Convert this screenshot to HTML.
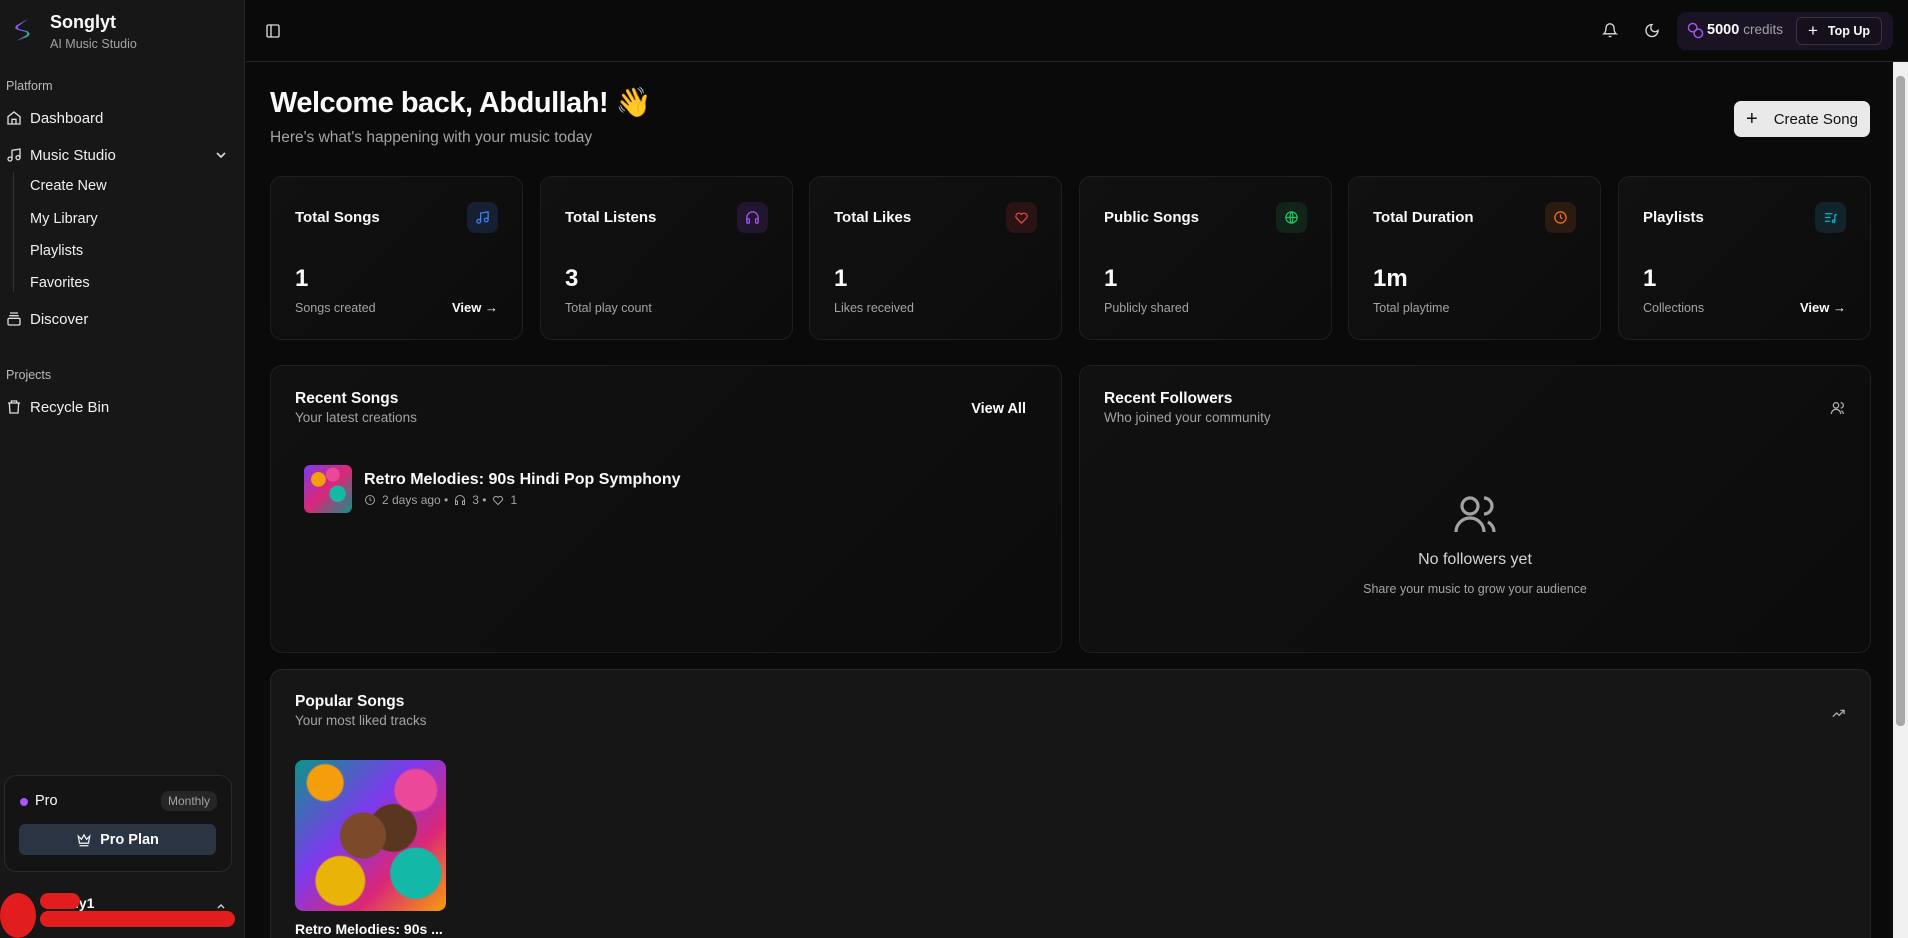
<!DOCTYPE html>
<html style="overflow:hidden;width:1908px;height:938px"><head><meta charset="utf-8"><style>
*{box-sizing:border-box;margin:0;padding:0}
body{width:1908px;height:938px;overflow:hidden;background:#0a0a0a;font-family:"Liberation Sans",sans-serif;color:#fafafa;position:relative}
.abs{position:absolute}
.sb{left:0;top:0;width:245px;height:938px;background:#171717;border-right:1px solid #262626}
.nav{position:absolute;left:30px;font-size:15px;color:#f0f0f0}
.ic{position:absolute;left:6px}
.hdr{left:246px;top:0;right:0;height:62px;border-bottom:1px solid #262626;background:#0a0a0a}
.card{position:absolute;border:1px solid #1f1f1f;border-radius:12px;background:linear-gradient(135deg,#111 0%,#0c0c0c 100%)}
.st .t{position:absolute;left:24px;top:32px;font-size:15px;font-weight:bold}
.st .ib{position:absolute;right:24px;top:25px;width:31px;height:31px;border-radius:8px;display:flex;align-items:center;justify-content:center}
.st .n{position:absolute;left:24px;top:88px;font-size:24px;font-weight:bold}
.st .s{position:absolute;left:24px;top:124px;font-size:12.5px;color:#a3a3a3}
.st .v{position:absolute;right:24px;top:123px;font-size:13px;font-weight:bold}
svg{display:block}
</style></head><body>
<div class="abs sb">
  <svg class="abs" style="left:10px;top:16px" width="24" height="28" viewBox="0 0 24 28"><defs><linearGradient id="g" x1="0" y1="0" x2="1" y2="1"><stop offset="0" stop-color="#a855f7"/><stop offset=".5" stop-color="#6366f1"/><stop offset="1" stop-color="#22c55e"/></linearGradient></defs><path d="M18 3 L7 9 Q3 12 8 14 L16 16 Q19 18 15 20 L6 25 L17 21 Q22 18 17 15 L9 13 Q6 11 10 9 Z" fill="url(#g)"/></svg>
  <div class="abs" style="left:50px;top:12px;font-size:18px;font-weight:bold">Songlyt</div>
  <div class="abs" style="left:50px;top:37px;font-size:12.5px;color:#a3a3a3">AI Music Studio</div>
  <div class="abs" style="left:6px;top:79px;font-size:12.5px;color:#bbb">Platform</div>
  <svg class="ic" style="top:110px" width="16" height="16" viewBox="0 0 24 24" fill="none" stroke="#ddd" stroke-width="2"><path d="M3 10l9-7 9 7v11H3z"/><path d="M9 21v-7h6v7"/></svg>
  <div class="nav" style="top:110px">Dashboard</div>
  <svg class="ic" style="top:147px" width="16" height="16" viewBox="0 0 24 24" fill="none" stroke="#ddd" stroke-width="2"><path d="M9 18V5l12-2v13"/><circle cx="6" cy="18" r="3"/><circle cx="18" cy="16" r="3"/></svg>
  <div class="nav" style="top:147px">Music Studio</div>
  <svg class="abs" style="left:215px;top:150px" width="12" height="10" viewBox="0 0 12 10" fill="none" stroke="#ddd" stroke-width="1.6"><path d="M2 3l4 4 4-4"/></svg>
  <div class="abs" style="left:13px;top:172px;width:1px;height:120px;background:#333"></div>
  <div class="nav" style="top:178px;font-size:14.5px">Create New</div>
  <div class="nav" style="top:211px;font-size:14.5px">My Library</div>
  <div class="nav" style="top:243px;font-size:14.5px">Playlists</div>
  <div class="nav" style="top:275px;font-size:14.5px">Favorites</div>
  <svg class="ic" style="top:311px" width="16" height="16" viewBox="0 0 24 24" fill="none" stroke="#ddd" stroke-width="2"><path d="M6 3h12M5 7h14"/><rect x="3" y="11" width="18" height="10" rx="2"/></svg>
  <div class="nav" style="top:311px">Discover</div>
  <div class="abs" style="left:6px;top:368px;font-size:12.5px;color:#bbb">Projects</div>
  <svg class="ic" style="top:399px" width="16" height="16" viewBox="0 0 24 24" fill="none" stroke="#ddd" stroke-width="2"><path d="M3 6h18M8 6V3h8v3M5 6l1 15h12l1-15"/></svg>
  <div class="nav" style="top:399px">Recycle Bin</div>
  <div class="abs" style="left:4px;top:775px;width:228px;height:97px;border:1px solid #2a2a2a;border-radius:12px;background:#141414">
    <div class="abs" style="left:15px;top:22px;width:8px;height:8px;border-radius:50%;background:#a855f7"></div>
    <div class="abs" style="left:30px;top:17px;font-size:14.5px">Pro</div>
    <div class="abs" style="right:14px;top:15px;padding:3px 7px;border-radius:8px;background:#262626;font-size:12px;color:#a3a3a3">Monthly</div>
    <div class="abs" style="left:14px;top:48px;width:197px;height:31px;border-radius:6px;background:#2b3442;display:flex;align-items:center;justify-content:center;font-size:14.5px;font-weight:bold">
      <svg width="16" height="14" viewBox="0 0 24 22" fill="none" stroke="#eee" stroke-width="2" style="margin-right:8px"><path d="M3 5l5 5 4-7 4 7 5-5-2 11H5z"/><path d="M5 20h14"/></svg>Pro Plan</div>
  </div>
  <div class="abs" style="left:75px;top:895px;font-size:14px;font-weight:bold">ly1</div>
  <svg class="abs" style="left:216px;top:903px" width="10" height="14" viewBox="0 0 10 14" fill="none" stroke="#ccc" stroke-width="1.5"><path d="M2 5l3-3 3 3M2 9l3 3 3-3"/></svg>
  <div class="abs" style="left:0;top:893px;width:36px;height:45px;border-radius:50%;background:#e11d1d"></div>
  <div class="abs" style="left:40px;top:893px;width:40px;height:16px;border-radius:8px;background:#e11d1d"></div>
  <div class="abs" style="left:40px;top:911px;width:195px;height:16px;border-radius:8px;background:#e11d1d"></div>
</div>

<div class="abs hdr">
  <svg class="abs" style="left:19px;top:23px" width="16" height="16" viewBox="0 0 24 24" fill="none" stroke="#ddd" stroke-width="2"><rect x="3" y="3" width="18" height="18" rx="2"/><path d="M9 3v18"/></svg>
  <svg class="abs" style="left:1356px;top:22px" width="16" height="17" viewBox="0 0 24 24" fill="none" stroke="#ddd" stroke-width="2"><path d="M6 8a6 6 0 0112 0c0 7 3 9 3 9H3s3-2 3-9"/><path d="M10 21h4"/></svg>
  <svg class="abs" style="left:1398px;top:22px" width="16" height="17" viewBox="0 0 24 24" fill="none" stroke="#ddd" stroke-width="2"><path d="M12 3a6 6 0 009 9 9 9 0 11-9-9z"/></svg>
  <div class="abs" style="left:1431px;top:12px;width:216px;height:38px;border-radius:9px;background:#1a1324">
    <svg class="abs" style="left:10px;top:10px" width="17" height="17" viewBox="0 0 24 24" fill="none" stroke="#a855f7" stroke-width="2"><circle cx="8" cy="8" r="6"/><circle cx="16" cy="16" r="6"/></svg>
    <div class="abs" style="left:30px;top:10px;font-size:14.5px;font-weight:bold">5000 <span style="font-weight:normal;color:#a3a3a3;font-size:13.5px">credits</span></div>
    <div class="abs" style="left:119px;top:5px;width:86px;height:28px;border:1px solid #3a3340;border-radius:6px;background:#15101c;font-size:12.5px;font-weight:bold;display:flex;align-items:center;justify-content:center"><span style="font-size:17px;font-weight:normal;margin-right:10px">+</span>Top Up</div>
  </div>
</div>
<div class="abs" style="left:1893px;top:62px;width:15px;height:876px;background:#f0f0f0"><div style="margin:14px 3px 0;height:650px;background:#a8a8a8;border-radius:4px"></div></div>

<div class="abs" style="left:270px;top:86px;font-size:29px;font-weight:bold;letter-spacing:-.5px">Welcome back, Abdullah! 👋</div>
<div class="abs" style="left:270px;top:129px;font-size:15.5px;color:#a3a3a3">Here's what's happening with your music today</div>
<div class="abs" style="left:1734px;top:101px;width:136px;height:36px;border-radius:7px;background:#e9e9e9;color:#111;font-size:15px;display:flex;align-items:center;justify-content:center"><span style="font-size:20px;margin-right:16px">+</span>Create Song</div>

<div class="card st" style="left:270px;top:176px;width:253px;height:164px"><div class="t">Total Songs</div><div class="ib" style="background:#172033"><svg width="15" height="15" viewBox="0 0 24 24" fill="none" stroke="#3b82f6" stroke-width="2"><path d="M9 18V5l12-2v13"/><circle cx="6" cy="18" r="3"/><circle cx="18" cy="16" r="3"/></svg></div><div class="n">1</div><div class="s">Songs created</div><div class="v">View →</div></div>
<div class="card st" style="left:540px;top:176px;width:253px;height:164px"><div class="t">Total Listens</div><div class="ib" style="background:#21162e"><svg width="15" height="15" viewBox="0 0 24 24" fill="none" stroke="#a855f7" stroke-width="2"><path d="M3 18v-6a9 9 0 0118 0v6"/><rect x="3" y="14" width="4" height="7" rx="1"/><rect x="17" y="14" width="4" height="7" rx="1"/></svg></div><div class="n">3</div><div class="s">Total play count</div></div>
<div class="card st" style="left:809px;top:176px;width:253px;height:164px"><div class="t">Total Likes</div><div class="ib" style="background:#2a1315"><svg width="15" height="15" viewBox="0 0 24 24" fill="none" stroke="#ef4444" stroke-width="2"><path d="M12 21l-8-8a5 5 0 017-7l1 1 1-1a5 5 0 017 7z"/></svg></div><div class="n">1</div><div class="s">Likes received</div></div>
<div class="card st" style="left:1079px;top:176px;width:253px;height:164px"><div class="t">Public Songs</div><div class="ib" style="background:#112419"><svg width="15" height="15" viewBox="0 0 24 24" fill="none" stroke="#22c55e" stroke-width="2"><circle cx="12" cy="12" r="9"/><path d="M3 12h18M12 3c3 3 3 15 0 18M12 3c-3 3-3 15 0 18"/></svg></div><div class="n">1</div><div class="s">Publicly shared</div></div>
<div class="card st" style="left:1348px;top:176px;width:253px;height:164px"><div class="t">Total Duration</div><div class="ib" style="background:#2b1a10"><svg width="15" height="15" viewBox="0 0 24 24" fill="none" stroke="#f97316" stroke-width="2"><circle cx="12" cy="12" r="9"/><path d="M12 7v5l3 2"/></svg></div><div class="n">1m</div><div class="s">Total playtime</div></div>
<div class="card st" style="left:1618px;top:176px;width:253px;height:164px"><div class="t">Playlists</div><div class="ib" style="background:#10242a"><svg width="15" height="15" viewBox="0 0 24 24" fill="none" stroke="#06b6d4" stroke-width="2"><path d="M3 6h12M3 12h9M3 18h8"/><path d="M19 18V8l3-1"/><circle cx="17" cy="18" r="2"/></svg></div><div class="n">1</div><div class="s">Collections</div><div class="v">View →</div></div>

<div class="card" style="left:270px;top:365px;width:792px;height:288px">
  <div class="abs" style="left:24px;top:24px;font-size:15.5px;font-weight:bold">Recent Songs</div>
  <div class="abs" style="left:24px;top:44px;font-size:13.5px;color:#a3a3a3">Your latest creations</div>
  <div class="abs" style="right:35px;top:35px;font-size:14.5px;font-weight:bold">View All</div>
  <div class="abs" style="left:33px;top:99px;width:48px;height:48px;border-radius:6px;background:radial-gradient(circle at 30% 30%,#f59e0b 0 15%,transparent 16%),radial-gradient(circle at 70% 60%,#14b8a6 0 18%,transparent 19%),radial-gradient(circle at 60% 20%,#ec4899 0 14%,transparent 15%),linear-gradient(135deg,#7c3aed,#db2777 50%,#0d9488)"></div>
  <div class="abs" style="left:93px;top:105px;font-size:16px;font-weight:bold">Retro Melodies: 90s Hindi Pop Symphony</div>
  <div class="abs" style="left:93px;top:127px;font-size:12px;color:#a3a3a3;display:flex;align-items:center;gap:6px">
    <svg width="12" height="12" viewBox="0 0 24 24" fill="none" stroke="#a3a3a3" stroke-width="2"><circle cx="12" cy="12" r="9"/><path d="M12 7v5l3 2"/></svg>2 days ago • <svg width="12" height="12" viewBox="0 0 24 24" fill="none" stroke="#a3a3a3" stroke-width="2"><path d="M3 18v-6a9 9 0 0118 0v6"/><rect x="3" y="14" width="4" height="7"/><rect x="17" y="14" width="4" height="7"/></svg>3 • <svg width="12" height="12" viewBox="0 0 24 24" fill="none" stroke="#a3a3a3" stroke-width="2"><path d="M12 21l-8-8a5 5 0 017-7l1 1 1-1a5 5 0 017 7z"/></svg>1</div>
</div>
<div class="card" style="left:1079px;top:365px;width:792px;height:288px">
  <div class="abs" style="left:24px;top:24px;font-size:15.5px;font-weight:bold">Recent Followers</div>
  <div class="abs" style="left:24px;top:44px;font-size:13.5px;color:#a3a3a3">Who joined your community</div>
  <svg class="abs" style="right:24px;top:34px" width="16" height="16" viewBox="0 0 24 24" fill="none" stroke="#aaa" stroke-width="2"><circle cx="9" cy="8" r="4"/><path d="M2 21a7 7 0 0114 0M16 4a4 4 0 010 8M20 21a6 6 0 00-3-5"/></svg>
  <svg class="abs" style="left:372px;top:124px" width="48" height="48" viewBox="0 0 24 24" fill="none" stroke="#a3a3a3" stroke-width="1.6"><circle cx="9" cy="8" r="4"/><path d="M2 21a7 7 0 0114 0M16 4a4 4 0 010 8M21 21a6 6 0 00-3-5"/></svg>
  <div class="abs" style="left:0;width:100%;top:185px;text-align:center;font-size:16px;color:#d4d4d4">No followers yet</div>
  <div class="abs" style="left:0;width:100%;top:216px;text-align:center;font-size:12.5px;color:#a3a3a3">Share your music to grow your audience</div>
</div>
<div class="abs" style="left:270px;top:669px;width:1601px;height:269px;overflow:hidden">
<div class="abs" style="left:0;top:0;width:1601px;height:300px;border:1px solid #262626;border-radius:12px;background:#161616">
  <div class="abs" style="left:24px;top:23px;font-size:15.5px;font-weight:bold">Popular Songs</div>
  <div class="abs" style="left:24px;top:43px;font-size:13.5px;color:#a3a3a3">Your most liked tracks</div>
  <svg class="abs" style="right:24px;top:36px" width="15" height="15" viewBox="0 0 24 24" fill="none" stroke="#aaa" stroke-width="2"><path d="M3 17l6-6 4 4 8-8M15 7h6v6"/></svg>
  <div class="abs" style="left:24px;top:90px;width:151px;height:151px;border-radius:8px;background:radial-gradient(circle at 20% 15%,#f59e0b 0 10%,transparent 11%),radial-gradient(circle at 80% 20%,#ec4899 0 12%,transparent 13%),radial-gradient(circle at 45% 50%,#7c4a2a 0 20%,transparent 21%),radial-gradient(circle at 65% 45%,#5a3520 0 18%,transparent 19%),radial-gradient(circle at 30% 80%,#eab308 0 15%,transparent 16%),radial-gradient(circle at 80% 75%,#14b8a6 0 15%,transparent 16%),linear-gradient(135deg,#0d9488,#7c3aed 40%,#db2777 70%,#f59e0b)"></div>
  <div class="abs" style="left:24px;top:251px;font-size:14px;font-weight:bold">Retro Melodies: 90s ...</div>
</div>
</div>
</body></html>
